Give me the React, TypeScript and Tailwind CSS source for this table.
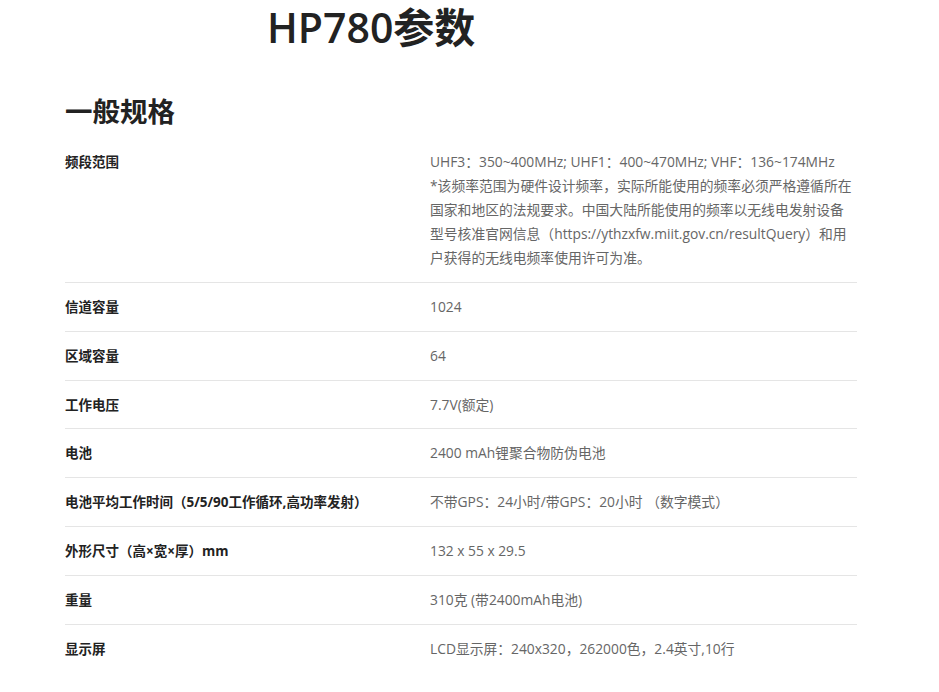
const rows: { label: string; value: string[] }[] = [
  {
    label: "频段范围",
    value: [
      "UHF3：350~400MHz; UHF1：400~470MHz; VHF：136~174MHz",
      "*该频率范围为硬件设计频率，实际所能使用的频率必须严格遵循所在国家和地区的法规要求。中国大陆所能使用的频率以无线电发射设备型号核准官网信息（https://ythzxfw.miit.gov.cn/resultQuery）和用户获得的无线电频率使用许可为准。",
    ],
  },
  { label: "信道容量", value: ["1024"] },
  { label: "区域容量", value: ["64"] },
  { label: "工作电压", value: ["7.7V(额定)"] },
  { label: "电池", value: ["2400 mAh锂聚合物防伪电池"] },
  { label: "电池平均工作时间（5/5/90工作循环,高功率发射）", value: ["不带GPS：24小时/带GPS：20小时 （数字模式）"] },
  { label: "外形尺寸（高×宽×厚）mm", value: ["132 x 55 x 29.5"] },
  { label: "重量", value: ["310克 (带2400mAh电池)"] },
  { label: "显示屏", value: ["LCD显示屏：240x320，262000色，2.4英寸,10行"] },
];

export default function App() {
  return (
    <div
      className="min-h-[692px] bg-white text-[#333]"
      style={{ fontFamily: '"Open Sans", "Noto Sans CJK SC", sans-serif' }}
    >
      <h1 className="pl-[267px] text-[41px] font-semibold leading-[54px] text-[#222]">
        HP780参数
      </h1>

      <div className="px-[65px] w-[922px]">
        <h2 className="mt-[38px] text-[27.5px] font-bold leading-[40px] text-[#222]">一般规格</h2>

        <div className="mt-[6px]">
          {rows.map((row, i) => (
            <div
              key={row.label}
              className={`flex pt-[12px] pb-[11.86px] ${i < rows.length - 1 ? "border-b border-[#e5e5e5]" : ""}`}
            >
              <div className="w-[365px] shrink-0 text-[13.5px] font-bold leading-[24px] text-[#222]">
                {row.label}
              </div>
              <div className="w-[427px] text-[13.8px] leading-[24px] text-[#666]">
                {row.value.map((v) => (
                  <p key={v}>{v}</p>
                ))}
              </div>
            </div>
          ))}
        </div>
      </div>
    </div>
  );
}
